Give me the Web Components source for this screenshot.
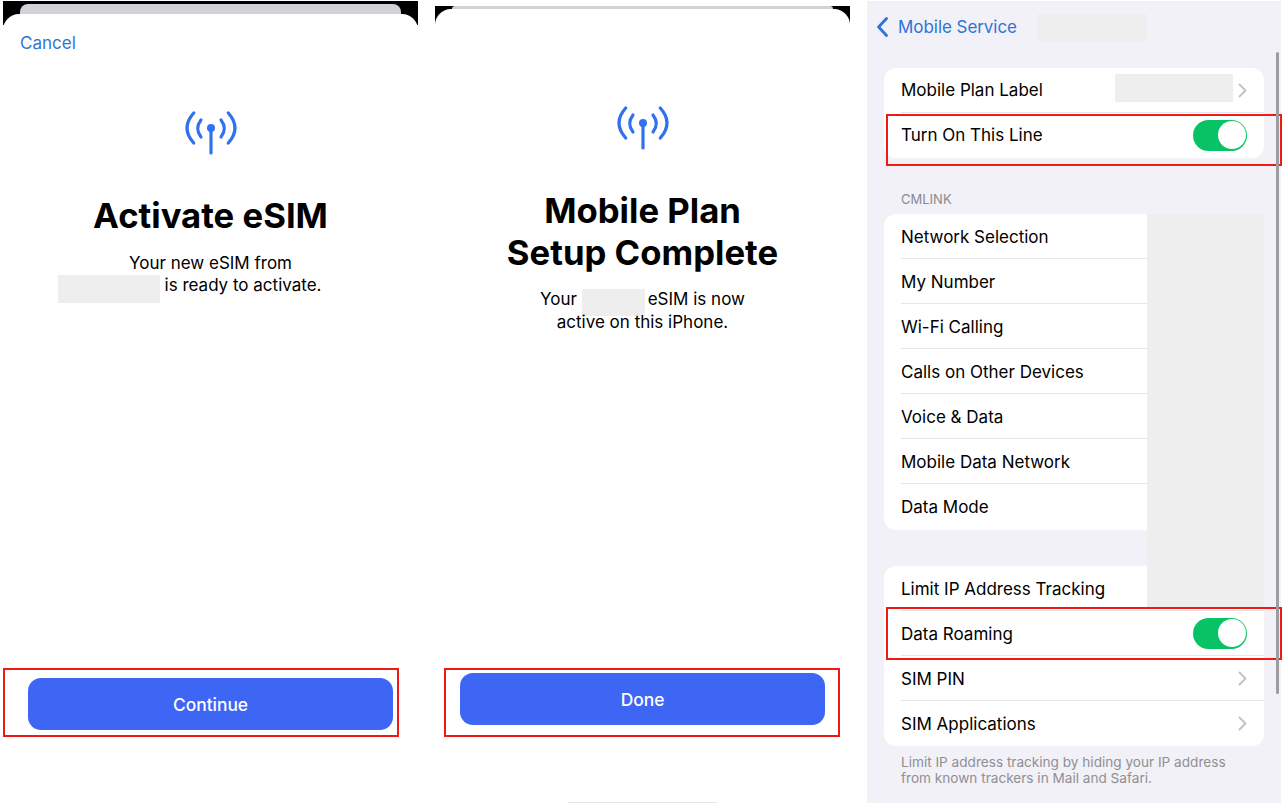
<!DOCTYPE html>
<html lang="en">
<head>
<meta charset="utf-8">
<title>eSIM setup</title>
<style>
    html, body { margin: 0; height: 803px; overflow: hidden; background: #fff; }
    body { font-family: Inter, "Liberation Sans", sans-serif; color: #000; }
    #page { display: flex; gap: 17px; padding-left: 3px; height: 803px; }
    .shift { margin-right: 42px; } /* second line sits left of centre in the reference */
</style>
</head>
<body>
<div id="page">

    <esim-sheet strip="10" style="margin-top:1px;--strip-top:3px;--body-gap:16px;--body-lh:22px" icon-gap="54" foot="73">
        <span slot="cancel">Cancel</span>
        <span slot="title">Activate eSIM</span>
        Your new eSIM from<br><span class="shift"><redact-box style="width:102px;height:28px;margin:-12px 5px -12px 0;vertical-align:baseline"></redact-box>is ready to activate.</span>
        <span slot="action">Continue</span>
        <red-box style="left:0;top:667px;width:392px;height:65px"></red-box>
    </esim-sheet>

    <esim-sheet strip="3" style="margin-top:6px;--strip-top:0px;--body-gap:15px;--body-lh:23px" icon-gap="94" foot="78">
        <span slot="title">Mobile Plan<br>Setup Complete</span>
        Your <redact-box style="width:63px;height:27px;margin:-11px 3px -11px 0;vertical-align:baseline"></redact-box>eSIM is now<br>active on this iPhone.
        <span slot="action">Done</span>
        <red-box style="left:9px;top:662px;width:392px;height:65px"></red-box>
        <home-bar></home-bar>
    </esim-sheet>

    <settings-page>
        <span slot="back">Mobile Service</span>
        <redact-box slot="back-note" style="width:110px;height:27px;margin-top:2px"></redact-box>

        <settings-card style="--label-pad:0px">
            <settings-row chevron>Mobile Plan Label<redact-box slot="value" style="width:118px;height:28px;margin-top:-4px"></redact-box></settings-row>
            <settings-row last toggle>Turn On This Line</settings-row>
        </settings-card>

        <section-label>CMLINK</section-label>
        <settings-card style="padding-bottom:1px">
            <settings-row>Network Selection</settings-row>
            <settings-row>My Number</settings-row>
            <settings-row>Wi-Fi Calling</settings-row>
            <settings-row>Calls on Other Devices</settings-row>
            <settings-row>Voice &amp; Data</settings-row>
            <settings-row>Mobile Data Network</settings-row>
            <settings-row last>Data Mode</settings-row>
        </settings-card>

        <settings-card style="margin-top:36px">
            <settings-row>Limit IP Address Tracking</settings-row>
            <settings-row toggle>Data Roaming</settings-row>
            <settings-row chevron>SIM PIN</settings-row>
            <settings-row last chevron>SIM Applications</settings-row>
        </settings-card>
        <section-note>Limit IP address tracking by hiding your IP address<br>from known trackers in Mail and Safari.</section-note>

        <redact-box slot="over" style="position:absolute;left:280px;top:213px;width:117px;height:393px"></redact-box>
        <red-box slot="over" style="left:19px;top:113px;width:392px;height:48px"></red-box>
        <red-box slot="over" style="left:19px;top:606px;width:392px;height:49px"></red-box>
    </settings-page>
</div>

<script type="text/javascript">

class RedactBox extends HTMLElement {
    connectedCallback(){
        this.attachShadow({mode: 'open'}).innerHTML = `
            <style>:host { display: inline-block; background: #eeeeee; vertical-align: middle; }</style>`;
    }
}
customElements.define('redact-box', RedactBox);

class RedBox extends HTMLElement {
    connectedCallback(){
        this.attachShadow({mode: 'open'}).innerHTML = `
            <style>:host { display: block; position: absolute; border: 2px solid #f01a14; pointer-events: none; }</style>`;
    }
}
customElements.define('red-box', RedBox);

class HomeBar extends HTMLElement {
    connectedCallback(){
        this.attachShadow({mode: 'open'}).innerHTML = `
            <style>:host { display: block; position: absolute; left: 133px; bottom: 0; width: 149px; height: 1px; background: #e4e4e4; }</style>`;
    }
}
customElements.define('home-bar', HomeBar);

// the antenna icon used on both setup sheets
const ANTENNA = `
    <svg width="56" height="48" viewBox="0 0 56 48" fill="none" stroke="#3170ee" stroke-linecap="round" stroke-width="3.2">
        <path d="M10.7 5Q-2.7 20 10.7 35"/>
        <path d="M45.3 5Q58.7 20 45.3 35"/>
        <path d="M18 12Q11.4 20.5 18 29"/>
        <path d="M38 12Q44.6 20.5 38 29"/>
        <path d="M28 20V45"/>
        <circle cx="28" cy="20" r="4" fill="#3170ee" stroke="none"/>
    </svg>`;

class EsimSheet extends HTMLElement {
    connectedCallback(){
        let shadowRoot = this.attachShadow({mode: 'open'});
        shadowRoot.innerHTML = `
            <style>
                :host {
                    display: flex;
                    flex-direction: column;
                    position: relative;
                    flex: 0 0 415px;
                    background: linear-gradient(#000 0 24px, #fff 24px);
                    overflow: hidden;
                }
                .strip { background: #d1d1d6; margin: var(--strip-top) 17px 0; border-radius: 8px 8px 0 0; flex: none; }
                .sheet {
                    flex: 1;
                    display: flex;
                    flex-direction: column;
                    align-items: center;
                    background: #fff;
                    border-radius: 16px 16px 0 0;
                }
                .cancel {
                    align-self: flex-start;
                    color: #2f74d9;
                    font-size: 17px;
                    line-height: 22px;
                    padding: 18px 0 0 17px;
                }
                svg { display: block; flex: none; }
                h1 {
                    font-size: 34.7px;
                    line-height: 42px;
                    font-weight: 700;
                    margin: 38px 0 var(--body-gap);
                    text-align: center;
                }
                .body { font-size: 17px; line-height: var(--body-lh); text-align: center; white-space: nowrap; }
                button {
                    all: unset;
                    box-sizing: border-box;
                    margin-top: auto;
                    width: 365px;
                    height: 52px;
                    border-radius: 13px;
                    background: #3e66f5;
                    color: #fff;
                    font-size: 17.4px;
                    font-weight: 500;
                    text-align: center;
                }
            </style>
            <div class="strip" style="height:${this.getAttribute('strip')}px"></div>
            <div class="sheet" style="padding-bottom:${this.getAttribute('foot')}px">
                <div class="cancel"><slot name="cancel"></slot></div>
                <div style="height:${this.getAttribute('icon-gap')}px;flex:none"></div>
                ${ANTENNA}
                <h1><slot name="title"></slot></h1>
                <div class="body"><slot></slot></div>
                <button><slot name="action"></slot></button>
            </div>`;
        if(!this.querySelector('[slot=cancel]')){
            shadowRoot.querySelector('.cancel').remove(); // second sheet has no cancel link
        }
    }
}
customElements.define('esim-sheet', EsimSheet);

class SettingsPage extends HTMLElement {
    connectedCallback(){
        this.attachShadow({mode: 'open'}).innerHTML = `
            <style>
                :host {
                    display: block;
                    position: relative;
                    flex: 0 0 414px;
                    margin-top: 1px;
                    background: #f1f1f7;
                }
                nav {
                    display: flex;
                    align-items: center;
                    height: 27px;
                    padding: 12px 0 28px 10px;
                    color: #2f74d9;
                    font-size: 17px;
                    letter-spacing: -0.05px;
                }
                nav svg { margin-right: 10px; }
                nav .note { margin-left: 20px; display: flex; }
                .list { padding: 0 17px; }
                .scroll {
                    position: absolute;
                    left: 409px;
                    top: 51px;
                    width: 3px;
                    height: 642px;
                    border-radius: 2px;
                    background: #9d9da1;
                }
            </style>
            <nav>
                <svg width="11" height="20" viewBox="0 0 11 20" fill="none" stroke="#2f74d9" stroke-width="2.8" stroke-linecap="round" stroke-linejoin="round"><path d="M9.5 1.5L1.6 10L9.5 18.5"/></svg>
                <slot name="back"></slot>
                <span class="note"><slot name="back-note"></slot></span>
            </nav>
            <div class="list"><slot></slot></div>
            <slot name="over"></slot>
            <div class="scroll"></div>`;
    }
}
customElements.define('settings-page', SettingsPage);

class SettingsCard extends HTMLElement {
    connectedCallback(){
        this.attachShadow({mode: 'open'}).innerHTML = `
            <style>:host { display: block; background: #fff; border-radius: 12px; overflow: hidden; }</style>
            <slot></slot>`;
    }
}
customElements.define('settings-card', SettingsCard);

class SettingsRow extends HTMLElement {
    connectedCallback(){
        let extra = '';
        if(this.hasAttribute('chevron')){
            extra = `<svg width="9" height="15" viewBox="0 0 9 15" fill="none" stroke="#c4c4c8" stroke-width="2" stroke-linecap="round" stroke-linejoin="round"><path d="M1.5 1.5L7.5 7.5L1.5 13.5"/></svg>`;
        }
        if(this.hasAttribute('toggle')){
            extra = `<ios-toggle></ios-toggle>`;
        }
        this.attachShadow({mode: 'open'}).innerHTML = `
            <style>
                :host { display: block; padding-left: 17px; font-size: 17px; }
                .row {
                    box-sizing: border-box;
                    height: 45px;
                    display: flex;
                    align-items: center;
                    justify-content: space-between;
                    padding-right: 17px;
                    border-bottom: 1px solid #e6e6ea;
                }
                :host([last]) .row { border-bottom-color: transparent; }
                .label { padding-top: var(--label-pad, 2px); }
                .right { display: flex; align-items: center; gap: 5px; }
            </style>
            <div class="row">
                <span class="label"><slot></slot></span>
                <span class="right"><slot name="value"></slot>${extra}</span>
            </div>`;
    }
}
customElements.define('settings-row', SettingsRow);

class IosToggle extends HTMLElement {
    connectedCallback(){
        this.attachShadow({mode: 'open'}).innerHTML = `
            <style>
                :host {
                    display: flex;
                    justify-content: flex-end;
                    align-items: center;
                    box-sizing: border-box;
                    width: 54px;
                    height: 31px;
                    padding: 1.5px;
                    border-radius: 16px;
                    background: #08c266;
                }
                div { width: 28px; height: 28px; border-radius: 50%; background: #fff; }
            </style>
            <div></div>`;
    }
}
customElements.define('ios-toggle', IosToggle);

class SectionLabel extends HTMLElement {
    connectedCallback(){
        this.attachShadow({mode: 'open'}).innerHTML = `
            <style>
                :host { display: block; padding: 33px 0 7px 17px; font-size: 13px; line-height: 16px; color: #8a8a8e; }
            </style>
            <slot></slot>`;
    }
}
customElements.define('section-label', SectionLabel);

class SectionNote extends HTMLElement {
    connectedCallback(){
        this.attachShadow({mode: 'open'}).innerHTML = `
            <style>
                :host { display: block; padding: 8px 0 0 17px; font-size: 13.6px; line-height: 16px; color: #8f8f94; }
            </style>
            <slot></slot>`;
    }
}
customElements.define('section-note', SectionNote);

</script>
</body>
</html>
